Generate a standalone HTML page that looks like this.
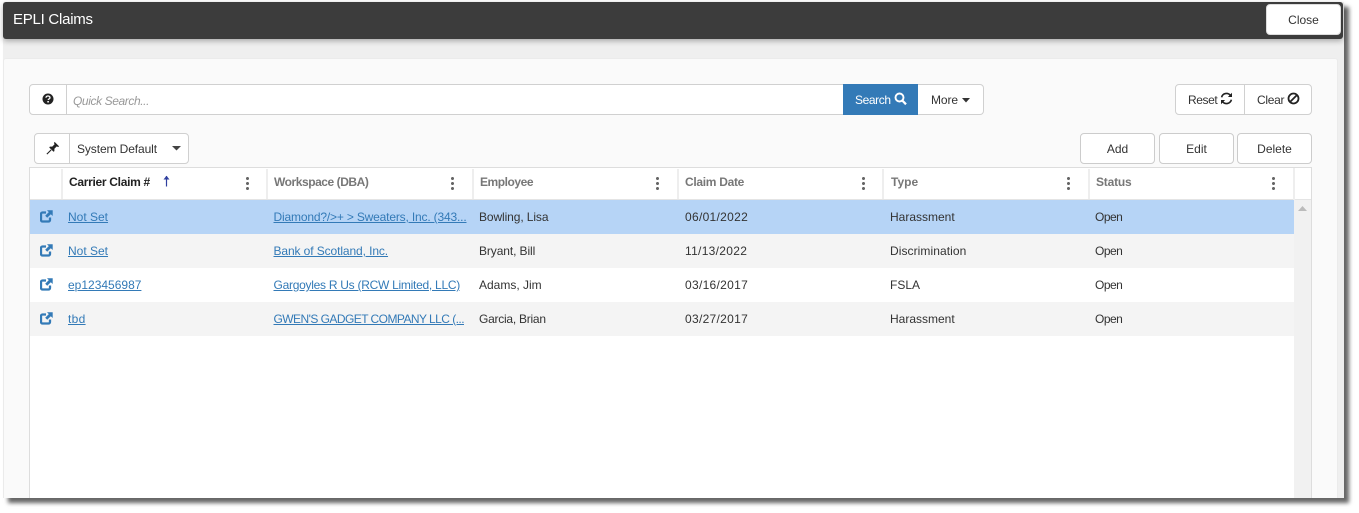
<!DOCTYPE html>
<html><head><meta charset="utf-8">
<style>
html,body{margin:0;padding:0;width:1359px;height:513px;overflow:hidden;background:#fff;font-family:"Liberation Sans",sans-serif;font-size:12px;color:#333}
div,a,span{position:absolute;box-sizing:border-box;white-space:nowrap}
svg{position:absolute;display:block}
.win{left:3px;top:2px;width:1341px;height:496px;background:#efefef;box-shadow:5px 5px 4px rgba(0,0,0,.6)}
.hd{left:3px;top:2px;width:1340px;height:37px;background:#3c3c3c;border-radius:3px;box-shadow:0 2px 6px rgba(0,0,0,.3)}
.pn{left:3px;top:58px;width:1335px;height:440px;background:#fafafa;border:1px solid #ebebeb;border-bottom:0;border-radius:3px 3px 0 0}
.btn{background:#fff;border:1px solid #ccc;border-radius:4px;text-align:center;height:31px;line-height:30px;color:#333}
.gh{background:#fff;border:1px solid #d0d0d0}
.t{line-height:16px;height:16px}
.r{left:30px;width:1264px;height:34px}
a{color:#337ab7;text-decoration:underline;line-height:16px;height:16px}
.th{top:174px;line-height:16px;font-weight:bold;color:#777;font-size:12px;letter-spacing:-.3px}
.sep{top:169px;width:2px;height:30px;background:#eee}
.dots{top:177px;width:3px;height:13px;background:radial-gradient(circle at 1.5px 1.5px,#666 1.4px,transparent 1.6px) 0 0/3px 5px repeat-y}
.d{letter-spacing:.3px}
.o{letter-spacing:-.5px}
</style></head><body>
<div class="win"></div>
<div class="hd"></div>
<div style="left:13px;top:10px;color:#fff;font-size:15px;line-height:20px;letter-spacing:-.25px">EPLI Claims</div>
<div class="btn" style="left:1266px;top:4px;width:75px;border-color:#ddd;font-size:12px">Close</div>
<div class="pn"></div>

<!-- search bar -->
<div class="gh" style="left:29px;top:84px;width:38px;height:31px;border-radius:4px 0 0 4px"></div>
<svg style="left:42px;top:93px" width="12" height="12" viewBox="0 0 12 12"><circle cx="6" cy="6" r="5.500" fill="#222"/><path d="M4 4.700C4 3.600 5 3 6 3s2 .6 2 1.700C8 6 6.300 5.900 6.200 7" fill="none" stroke="#fff" stroke-width="1.300"/><rect x="5.300" y="8" width="1.600" height="1.500" fill="#fff"/></svg>
<div class="gh" style="left:66px;top:84px;width:778px;height:31px"></div>
<div class="t" style="left:73px;top:93px;font-style:italic;color:#999;font-size:12px;letter-spacing:-.4px">Quick Search...</div>
<div style="left:843px;top:84px;width:76px;height:31px;background:#337ab7"></div>
<div class="t" style="left:855px;top:92px;color:#fff;letter-spacing:-.4px">Search</div>
<svg style="left:894px;top:92px" width="13" height="14" viewBox="0 0 13 14"><circle cx="5.500" cy="5.500" r="4" fill="none" stroke="#fff" stroke-width="1.900"/><path d="M8.300 8.500L12 12.300" stroke="#fff" stroke-width="2.300"/></svg>
<div class="gh" style="left:918px;top:84px;width:66px;height:31px;border-radius:0 4px 4px 0;border-left:0"></div>
<div class="t" style="left:931px;top:92px;letter-spacing:-.1px">More</div>
<svg style="left:961px;top:98px" width="10" height="5" viewBox="0 0 10 5"><path d="M1 0H9L5 4.500Z" fill="#333"/></svg>

<!-- reset / clear -->
<div class="gh" style="left:1175px;top:84px;width:70px;height:31px;border-radius:4px 0 0 4px"></div>
<div class="t" style="left:1188px;top:92px;letter-spacing:-.4px">Reset</div>
<svg style="left:1220px;top:92px" width="13" height="13" viewBox="0 0 13 13"><path d="M1.600 5.300A5 5 0 0 1 10.400 3.400M11.400 7.700A5 5 0 0 1 2.600 9.600" fill="none" stroke="#222" stroke-width="1.600"/><path d="M12 .8V5H7.900ZM1 12.200V8H5.100Z" fill="#222"/></svg>
<div class="gh" style="left:1244px;top:84px;width:68px;height:31px;border-radius:0 4px 4px 0"></div>
<div class="t" style="left:1257px;top:92px;letter-spacing:-.3px">Clear</div>
<svg style="left:1287px;top:92px" width="13" height="13" viewBox="0 0 13 13"><circle cx="6.500" cy="6.500" r="5" fill="none" stroke="#222" stroke-width="1.800"/><path d="M3 10L10 3" stroke="#222" stroke-width="1.800"/></svg>

<!-- toolbar -->
<div class="gh" style="left:34px;top:133px;width:36px;height:31px;border-radius:4px 0 0 4px"></div>
<svg style="left:46px;top:141px" width="14" height="14" viewBox="0 0 13 13"><path d="M8 .8L12.200 5 11.200 5.600 10 5 7.800 7.200 7.800 9.400 7 10 3 6 3.600 5.200 5.800 5.200 8 3 7.400 1.800Z" fill="#222"/><path d="M4.800 8.200L.8 12.200" stroke="#222" stroke-width="1"/></svg>
<div class="gh" style="left:69px;top:133px;width:120px;height:31px;border-radius:0 4px 4px 0"></div>
<div class="t" style="left:77px;top:141px;letter-spacing:-.1px">System Default</div>
<svg style="left:172px;top:146px" width="9" height="5" viewBox="0 0 9 5"><path d="M0 0H9L4.500 4.500Z" fill="#444"/></svg>
<div class="btn" style="left:1080px;top:133px;width:75px">Add</div>
<div class="btn" style="left:1159px;top:133px;width:75px">Edit</div>
<div class="btn" style="left:1237px;top:133px;width:75px">Delete</div>

<!-- grid -->
<div style="left:29px;top:167px;width:1283px;height:331px;background:#fff;border:1px solid #ddd;border-bottom:0"></div>
<div style="left:30px;top:199px;width:1281px;height:2px;background:#e4e4e4"></div>
<div style="left:1293px;top:168px;width:2px;height:32px;background:#eee"></div>
<div style="left:1294px;top:200px;width:17px;height:298px;background:#f1f1f1"></div>
<svg style="left:1298px;top:206px" width="9" height="5" viewBox="0 0 9 5"><path d="M0 5L4.500 0 9 5Z" fill="#bbb"/></svg>

<div class="sep" style="left:61px"></div>
<div class="sep" style="left:266px"></div>
<div class="sep" style="left:472px"></div>
<div class="sep" style="left:677px"></div>
<div class="sep" style="left:882px"></div>
<div class="sep" style="left:1088px"></div>

<div class="th" style="left:69px;color:#222">Carrier Claim #</div>
<svg style="left:162px;top:175px" width="9" height="12" viewBox="0 0 9 12"><path d="M4.500 1V11.500" stroke="#2f3f9f" stroke-width="1.200"/><path d="M1.500 4.500L4.500 .8 7.500 4.500Z" fill="#2f3f9f"/></svg>
<div class="th" style="left:274px;letter-spacing:-.45px">Workspace (DBA)</div>
<div class="th" style="left:480px;letter-spacing:-.45px">Employee</div>
<div class="th" style="left:685px;letter-spacing:-.3px">Claim Date</div>
<div class="th" style="left:891px;letter-spacing:0">Type</div>
<div class="th" style="left:1096px;letter-spacing:-.2px">Status</div>
<div class="dots" style="left:246px"></div>
<div class="dots" style="left:451px"></div>
<div class="dots" style="left:656px"></div>
<div class="dots" style="left:862px"></div>
<div class="dots" style="left:1067px"></div>
<div class="dots" style="left:1272px"></div>

<div class="r" style="top:200px;background:#b6d4f6"></div>
<div class="r" style="top:234px;background:#f4f4f4"></div>
<div class="r" style="top:302px;background:#f4f4f4"></div>

<svg style="left:40px;top:210px" width="13" height="13" viewBox="0 0 13 13"><path d="M6 2.500H2.500A1.500 1.500 0 0 0 1 4V10A1.500 1.500 0 0 0 2.500 11.500H8.500A1.500 1.500 0 0 0 10 10V7.500" fill="none" stroke="#337ab7" stroke-width="2.300"/><path d="M7 .3H12.700V6L10.800 4.300 7.200 7.800 5.200 5.800 8.800 2.100Z" fill="#337ab7"/></svg>
<svg style="left:40px;top:244px" width="13" height="13" viewBox="0 0 13 13"><path d="M6 2.500H2.500A1.500 1.500 0 0 0 1 4V10A1.500 1.500 0 0 0 2.500 11.500H8.500A1.500 1.500 0 0 0 10 10V7.500" fill="none" stroke="#337ab7" stroke-width="2.300"/><path d="M7 .3H12.700V6L10.800 4.300 7.200 7.800 5.200 5.800 8.800 2.100Z" fill="#337ab7"/></svg>
<svg style="left:40px;top:278px" width="13" height="13" viewBox="0 0 13 13"><path d="M6 2.500H2.500A1.500 1.500 0 0 0 1 4V10A1.500 1.500 0 0 0 2.500 11.500H8.500A1.500 1.500 0 0 0 10 10V7.500" fill="none" stroke="#337ab7" stroke-width="2.300"/><path d="M7 .3H12.700V6L10.800 4.300 7.200 7.800 5.200 5.800 8.800 2.100Z" fill="#337ab7"/></svg>
<svg style="left:40px;top:312px" width="13" height="13" viewBox="0 0 13 13"><path d="M6 2.500H2.500A1.500 1.500 0 0 0 1 4V10A1.500 1.500 0 0 0 2.500 11.500H8.500A1.500 1.500 0 0 0 10 10V7.500" fill="none" stroke="#337ab7" stroke-width="2.300"/><path d="M7 .3H12.700V6L10.800 4.300 7.200 7.800 5.200 5.800 8.800 2.100Z" fill="#337ab7"/></svg>

<a style="left:68px;top:209px">Not Set</a>
<a style="left:273.500px;top:209px;letter-spacing:-.17px">Diamond?/&gt;+ &gt; Sweaters, Inc. (343...</a>
<div class="t" style="left:479px;top:209px;letter-spacing:-.1px">Bowling, Lisa</div>
<div class="t d" style="left:685px;top:209px">06/01/2022</div>
<div class="t" style="left:890px;top:209px">Harassment</div>
<div class="t o" style="left:1095px;top:209px">Open</div>

<a style="left:68px;top:243px">Not Set</a>
<a style="left:273.500px;top:243px;letter-spacing:-.1px">Bank of Scotland, Inc.</a>
<div class="t" style="left:479px;top:243px;letter-spacing:-.1px">Bryant, Bill</div>
<div class="t d" style="left:685px;top:243px">11/13/2022</div>
<div class="t" style="left:890px;top:243px;letter-spacing:.07px">Discrimination</div>
<div class="t o" style="left:1095px;top:243px">Open</div>

<a style="left:68px;top:277px">ep123456987</a>
<a style="left:273.500px;top:277px;letter-spacing:-.27px">Gargoyles R Us (RCW Limited, LLC)</a>
<div class="t" style="left:479px;top:277px">Adams, Jim</div>
<div class="t d" style="left:685px;top:277px">03/16/2017</div>
<div class="t" style="left:890px;top:277px">FSLA</div>
<div class="t o" style="left:1095px;top:277px">Open</div>

<a style="left:68px;top:311px;letter-spacing:.3px">tbd</a>
<a style="left:273.500px;top:311px;letter-spacing:-.55px">GWEN'S GADGET COMPANY LLC (...</a>
<div class="t" style="left:479px;top:311px;letter-spacing:-.25px">Garcia, Brian</div>
<div class="t d" style="left:685px;top:311px">03/27/2017</div>
<div class="t" style="left:890px;top:311px">Harassment</div>
<div class="t o" style="left:1095px;top:311px">Open</div>
</body></html>
